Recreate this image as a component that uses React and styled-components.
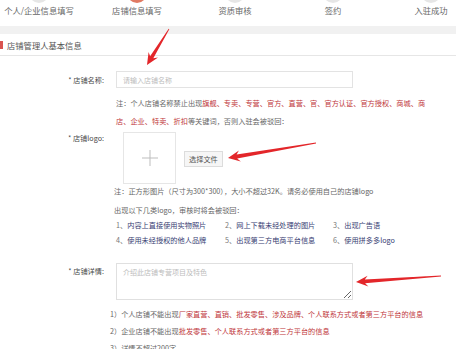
import React from "react";
import styled, { createGlobalStyle } from "styled-components";

const GlobalStyle = createGlobalStyle`
  html, body {
    margin: 0;
    padding: 0;
    background: #fff;
  }
  body {
    font-family: "Noto Sans CJK SC", "Noto Sans", sans-serif;
    color: #666;
  }
`;

const steps = [
    { name: "个人/企业信息填写", done: false },
    { name: "店铺信息填写", done: true },
    { name: "资质审核", done: false },
    { name: "签约", done: false },
    { name: "入驻成功", done: false },
];

const logoRules = [
    "内容上直接使用实物照片",
    "网上下载未经处理的图片",
    "出现广告语",
    "使用未经授权的他人品牌",
    "出现第三方电商平台信息",
    "使用拼多多logo",
];

// tapered red annotation arrow, tail -> tip
const arrowPoints = (tx, ty, px, py) => {
    const dx = px - tx;
    const dy = py - ty;
    const len = Math.hypot(dx, dy);
    const ux = dx / len;
    const uy = dy / len;
    const nx = -uy;
    const ny = ux;
    const L = 12, W = 5.5, w0 = 0.4, w1 = 1.9;
    const bx = px - ux * L;
    const by = py - uy * L;
    const nb = px - ux * (L - 3);
    const nby = py - uy * (L - 3);
    const pts = [
        [tx + nx * w0, ty + ny * w0],
        [nb + nx * w1, nby + ny * w1],
        [bx + nx * W, by + ny * W],
        [px, py],
        [bx - nx * W, by - ny * W],
        [nb - nx * w1, nby - ny * w1],
        [tx - nx * w0, ty - ny * w0],
    ];
    return pts.map((p) => p.map((v) => v.toFixed(1)).join(",")).join(" ");
};

const arrows = [
    [169, 29, 147, 65],
    [316, 143, 228, 158],
    [441, 276, 356, 282],
];

export default function App() {
    return (
        <>
            <GlobalStyle />
            <Page>
                <StepBar>
                    {steps.map((s) => (
                        <Step key={s.name}>
                            <StepDot $active={s.done} />
                            <StepName>{s.name}</StepName>
                        </Step>
                    ))}
                </StepBar>
                <GreyBand />
                <SectionHead>
                    <RedMark />
                    <span>店铺管理人基本信息</span>
                </SectionHead>

                <Form>
                    <Row>
                        <Label>* 店铺名称:</Label>
                        <TextInput placeholder="请输入店铺名称" />
                    </Row>
                    <Notes $top={6}>
                        <Line>
                            注：个人店铺名称禁止出现
                            <Red>旗舰、专卖、专营、官方、直营、官、官方认证、官方授权、商城、商</Red>
                        </Line>
                        <Line>
                            <Red>店、企业、特卖、折扣</Red>等关键词，否则入驻会被驳回：
                        </Line>
                    </Notes>

                    <LogoRow>
                        <Label>* 店铺logo:</Label>
                        <LogoArea>
                            <LogoBox>
                                <svg width="16" height="16" viewBox="0 0 16 16">
                                    <path d="M8 0v16M0 8h16" stroke="#bdbdbd" strokeWidth="1" />
                                </svg>
                            </LogoBox>
                            <FileButton>选择文件</FileButton>
                        </LogoArea>
                    </LogoRow>
                    <Notes $top={0}>
                        <SmallLine>注：正方形图片（尺寸为300*300），大小不超过32K。请务必使用自己的店铺logo</SmallLine>
                        <SmallLine $top={5}>出现以下几类logo，审核时将会被驳回：</SmallLine>
                        <RuleGrid>
                            {logoRules.map((r, i) => (
                                <Rule key={r}>
                                    <RuleNum>{i + 1}、</RuleNum>
                                    {r}
                                </Rule>
                            ))}
                        </RuleGrid>
                    </Notes>

                    <DetailRow>
                        <DetailLabel>* 店铺详情:</DetailLabel>
                        <TextArea placeholder="介绍此店铺专营项目及特色" />
                    </DetailRow>
                    <DetailNotes>
                        <DetailLine>
                            1）个人店铺不能出现
                            <Red>厂家直营、直销、批发零售、涉及品牌、个人联系方式或者第三方平台的信息</Red>
                        </DetailLine>
                        <DetailLine>
                            2）企业店铺不能出现<Red>批发零售、个人联系方式或者第三方平台的信息</Red>
                        </DetailLine>
                        <DetailLine>3）详情不超过200字</DetailLine>
                    </DetailNotes>
                </Form>

                <Overlay width="456" height="349" viewBox="0 0 456 349">
                    {arrows.map((a, i) => (
                        <polygon key={i} points={arrowPoints(...a)} fill="#e3262a" />
                    ))}
                </Overlay>
            </Page>
        </>
    );
}

const Page = styled.div`
    position: relative;
    width: 456px;
    height: 349px;
    overflow: hidden;
    background: #fff;
`;

const StepBar = styled.div`
    display: grid;
    grid-template-columns: repeat(5, 98px);
    margin-left: -10px;
    height: 26px;
    overflow: hidden;
`;

const Step = styled.div`
    display: flex;
    flex-direction: column;
    align-items: center;
`;

const StepDot = styled.div`
    width: 20px;
    height: 20px;
    border-radius: 50%;
    margin-top: -17px;
    background: ${(p) => (p.$active ? "#e07a63" : "#e6e6e6")};
`;

const StepName = styled.div`
    font-size: 8.3px;
    line-height: 14px;
    color: #666;
    white-space: nowrap;
`;

const GreyBand = styled.div`
    height: 8px;
    background: #f1f1f1;
`;

const SectionHead = styled.div`
    display: flex;
    align-items: center;
    gap: 4px;
    height: 21px;
    border-bottom: 1px solid #e6e6e6;
    font-size: 8.3px;
    color: #555;
`;

const RedMark = styled.div`
    width: 3px;
    height: 8px;
    background: #d9534f;
`;

const Form = styled.div`
    padding-top: 15px;
`;

const Row = styled.div`
    display: grid;
    grid-template-columns: 104px 237px;
    column-gap: 12px;
    align-items: center;
`;

const Label = styled.div`
    text-align: right;
    font-size: 7.2px;
    line-height: 12px;
    color: #4a4a4a;
    white-space: nowrap;
`;

const DetailLabel = styled(Label)`
    line-height: 16px;
`;

const TextInput = styled.input`
    box-sizing: border-box;
    height: 17px;
    width: 237px;
    border: 1px solid #e3e3e3;
    padding: 0 6px;
    font-family: inherit;
    font-size: 7px;
    outline: none;
    &::placeholder {
        color: #bcbcbc;
    }
`;

const Notes = styled.div`
    margin-left: 116px;
    margin-top: ${(p) => p.$top}px;
`;

const Line = styled.div`
    font-size: 7.2px;
    line-height: 18px;
    color: #666;
    white-space: nowrap;
`;

const Red = styled.span`
    color: #c0363a;
`;

const LogoRow = styled.div`
    display: grid;
    grid-template-columns: 104px auto;
    column-gap: 12px;
    align-items: start;
    margin-top: 2px;
`;

const LogoArea = styled.div`
    display: flex;
    align-items: center;
    gap: 8px;
    padding-left: 7px;
`;

const LogoBox = styled.div`
    box-sizing: border-box;
    width: 53px;
    height: 52px;
    border: 1px solid #e6e6e6;
    display: flex;
    align-items: center;
    justify-content: center;
`;

const FileButton = styled.div`
    box-sizing: border-box;
    height: 16px;
    padding: 0 4px;
    border: 1px solid #dcdcdc;
    background: #f6f6f6;
    font-size: 7.2px;
    line-height: 14px;
    color: #555;
    margin-top: 2px;
`;

const SmallLine = styled.div`
    font-size: 7.2px;
    line-height: 14px;
    color: #666;
    margin-top: ${(p) => p.$top || 0}px;
    margin-left: -2px;
    white-space: nowrap;
`;

const RuleGrid = styled.div`
    display: grid;
    grid-template-columns: 109px 108px auto;
    margin-top: 1px;
`;

const Rule = styled.div`
    font-size: 7.2px;
    line-height: 15px;
    color: #373d72;
    white-space: nowrap;
`;

const RuleNum = styled.span`
    color: #777;
`;

const DetailRow = styled.div`
    display: grid;
    grid-template-columns: 104px 237px;
    column-gap: 12px;
    align-items: start;
    margin-top: 15px;
`;

const TextArea = styled.textarea`
    box-sizing: border-box;
    width: 237px;
    height: 37px;
    border: 1px solid #e0e0e0;
    padding: 3px 6px;
    font-family: inherit;
    font-size: 7px;
    resize: vertical;
    outline: none;
    display: block;
    &::placeholder {
        color: #bcbcbc;
    }
`;

const DetailNotes = styled.div`
    margin-left: 110px;
    margin-top: 6px;
`;

const DetailLine = styled.div`
    font-size: 7.2px;
    line-height: 17px;
    color: #666;
    white-space: nowrap;
`;

const Overlay = styled.svg`
    position: absolute;
    left: 0;
    top: 0;
    pointer-events: none;
`;
